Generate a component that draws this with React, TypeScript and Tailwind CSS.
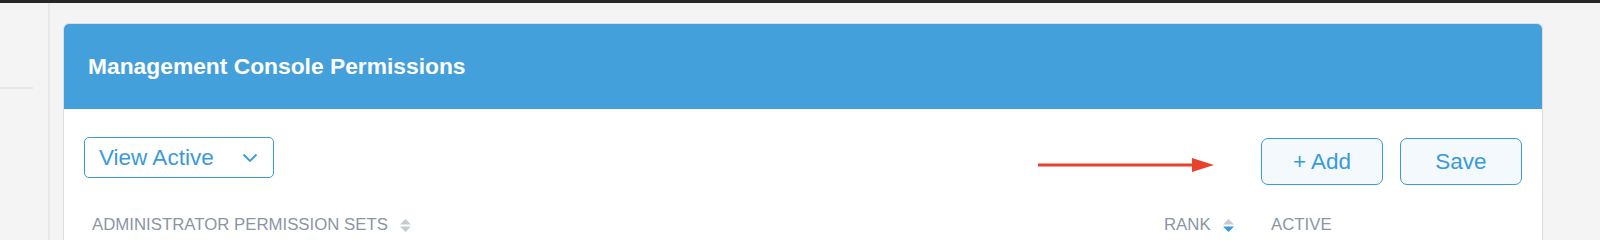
import React from "react";

function SortIcon({ active }: { active?: "down" | "up" }) {
  return (
    <svg width="13" height="17" viewBox="0 0 13 17" className="ml-[11px]">
      <path d="M1 7.5 L6.5 2 L12 7.5 Z" fill={active === "up" ? "#3a9ad9" : "#c5cbd3"} />
      <path d="M1 9.5 L6.5 15 L12 9.5 Z" fill={active === "down" ? "#3a9ad9" : "#c5cbd3"} />
    </svg>
  );
}

export default function App() {
  return (
    <div
      className="w-[1600px] h-[240px] overflow-hidden bg-[#f4f4f4] flex flex-col"
      style={{ fontFamily: '"Liberation Sans", Arial, sans-serif' }}
    >
      <div className="h-[3px] bg-[#262626] shrink-0" />
      <div className="flex flex-1 min-h-0">
        <div className="w-[48px] shrink-0 flex flex-col">
          <div className="h-[84px]" />
          <div className="h-[2px] w-[33px] bg-[#e6e6e6]" />
        </div>
        <div className="w-[2px] shrink-0 bg-[#e8e8e8]" />
        <div className="flex-1 pl-[13px] pt-[20px]">
          <div className="w-[1480px] bg-white rounded-[6px] border border-[#dedede] overflow-hidden pb-[80px]">
            <div className="h-[86px] bg-[#44a0da] flex items-center pl-[25px] -mt-px -mx-px">
              <span className="text-white text-[22.8px] font-bold">
                Management Console Permissions
              </span>
            </div>
            <div className="px-[20px] pt-[28px]">
              <div className="flex items-start">
                <button className="w-[190px] h-[41px] border border-[#3a9ad9] rounded-[5px] flex items-center justify-between pl-[14px] pr-[15px] text-[#3a9ad9] text-[22.5px]">
                  <span>View Active</span>
                  <svg width="16" height="10" viewBox="0 0 16 10">
                    <path d="M1.5 1.5 L8 8 L14.5 1.5" fill="none" stroke="#3a9ad9" strokeWidth="1.8" />
                  </svg>
                </button>
                <div className="flex-1 flex justify-end pt-[21px] pr-[47px]">
                  <svg width="176" height="14" viewBox="0 0 176 14">
                    <line x1="0" y1="7" x2="158" y2="7" stroke="#e8412c" strokeWidth="3" />
                    <path d="M154 0 L176 7 L154 14 Z" fill="#e8412c" />
                  </svg>
                </div>
                <button className="w-[122px] h-[47px] border border-[#3a9ad9] rounded-[7px] bg-[#f3f9fd] text-[#3a9ad9] text-[22.5px] mt-px">
                  + Add
                </button>
                <button className="ml-[17px] w-[122px] h-[47px] border border-[#3a9ad9] rounded-[7px] bg-[#f3f9fd] text-[#3a9ad9] text-[22.5px] mt-px">
                  Save
                </button>
              </div>
              <div className="flex items-center mt-[30px] text-[16.8px] leading-[20px] text-[#8a95a6] pl-[8px]">
                <div className="flex items-center flex-1">
                  <span>ADMINISTRATOR PERMISSION SETS</span>
                  <SortIcon />
                </div>
                <div className="flex items-center w-[107px]">
                  <span>RANK</span>
                  <SortIcon active="down" />
                </div>
                <div className="w-[251px]">
                  <span>ACTIVE</span>
                </div>
              </div>
            </div>
          </div>
        </div>
      </div>
    </div>
  );
}
